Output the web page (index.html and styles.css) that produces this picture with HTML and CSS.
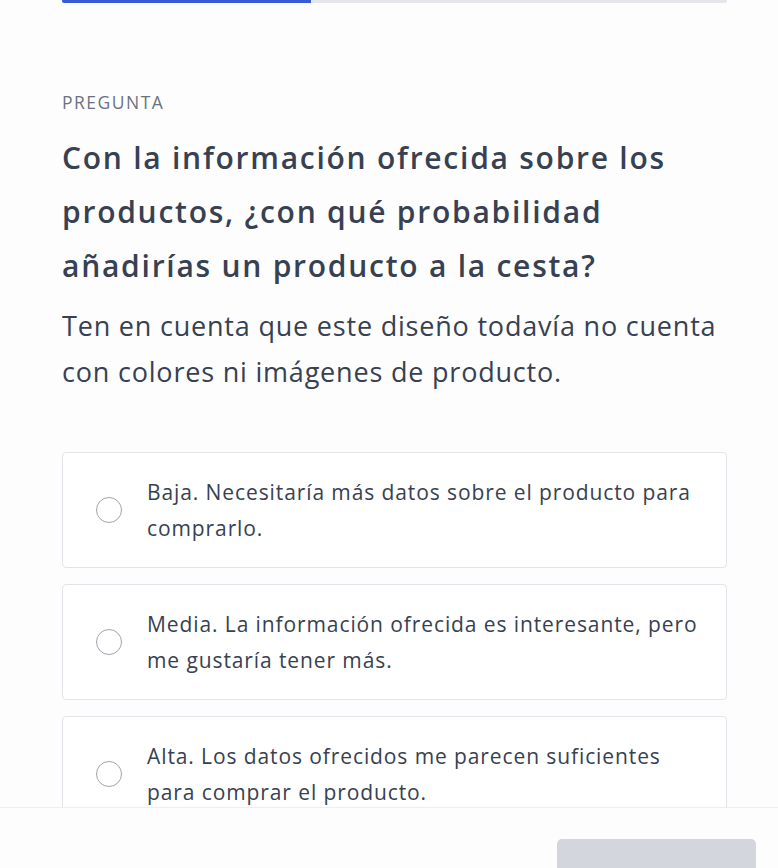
FILE: index.html
```html
<!DOCTYPE html>
<html lang="es">
<head>
<meta charset="utf-8">
<link rel="stylesheet" href="styles.css">
</head>
<body>
<div class="page">
  <div class="progress"><div class="progress-fill"></div></div>
  <main class="content">
    <div class="label">PREGUNTA</div>
    <h1 class="question">Con la información ofrecida sobre los productos, ¿con qué probabilidad añadirías un producto a la cesta?</h1>
    <p class="hint">Ten en cuenta que este diseño todavía no cuenta con colores ni imágenes de producto.</p>
    <div class="options">
      <label class="option"><span class="radio"></span><span class="option-text">Baja. Necesitaría más datos sobre el producto para comprarlo.</span></label>
      <label class="option"><span class="radio"></span><span class="option-text">Media. La información ofrecida es interesante, pero me gustaría tener más.</span></label>
      <label class="option"><span class="radio"></span><span class="option-text">Alta. Los datos ofrecidos me parecen suficientes para comprar el producto.</span></label>
    </div>
  </main>
  <footer class="footer"><button class="next" type="button"></button></footer>
</div>
</body>
</html>
```
FILE: styles.css
```css
html, body {
  margin: 0;
  padding: 0;
  background: #fdfdfe;
  font-family: "Open Sans", Lato, sans-serif;
  color: #374151;
  height: 100%;
  overflow: hidden;
}
.page {
  position: relative;
  height: 868px;
  overflow: hidden;
}
.progress {
  margin: 0 51px 0 62px;
  height: 3px;
  background: #e4e6ec;
  border-radius: 0 0 2px 2px;
  overflow: hidden;
}
.progress-fill {
  width: 249px;
  height: 100%;
  background: #3b5bd6;
}
.content {
  margin: 0 51px 0 62px;
  padding-top: 89px;
}
.label {
  font-size: 17.5px;
  line-height: 20px;
  letter-spacing: 1.5px;
  color: #6b7280;
}
.question {
  margin: 19px 0 0;
  font-size: 30px;
  line-height: 54px;
  font-weight: 600;
  letter-spacing: 1.75px;
  color: #374151;
}
.hint {
  margin: 10px 0 0;
  font-size: 27px;
  line-height: 46px;
  letter-spacing: 0.8px;
  color: #374151;
}
.options {
  margin-top: 57px;
  display: flex;
  flex-direction: column;
  gap: 16px;
}
.option {
  display: flex;
  align-items: center;
  gap: 25px;
  box-sizing: border-box;
  height: 116px;
  padding: 0 20px 0 33px;
  border: 1px solid #e2e4e9;
  border-radius: 4px;
  background: #fff;
}
.radio {
  flex: none;
  width: 26px;
  height: 26px;
  border: 1.5px solid #a0a4ab;
  border-radius: 50%;
  box-sizing: border-box;
}
.option-text {
  font-size: 21px;
  line-height: 36px;
  letter-spacing: 0.9px;
  color: #374151;
}
.footer {
  position: absolute;
  left: 0;
  right: 0;
  bottom: 0;
  height: 60px;
  border-top: 1px solid #eceef2;
  background: #fdfdfe;
}
.next {
  position: absolute;
  left: 557px;
  top: 31px;
  width: 199px;
  height: 50px;
  border: none;
  border-radius: 5px;
  background: #d3d6dd;
}
```
